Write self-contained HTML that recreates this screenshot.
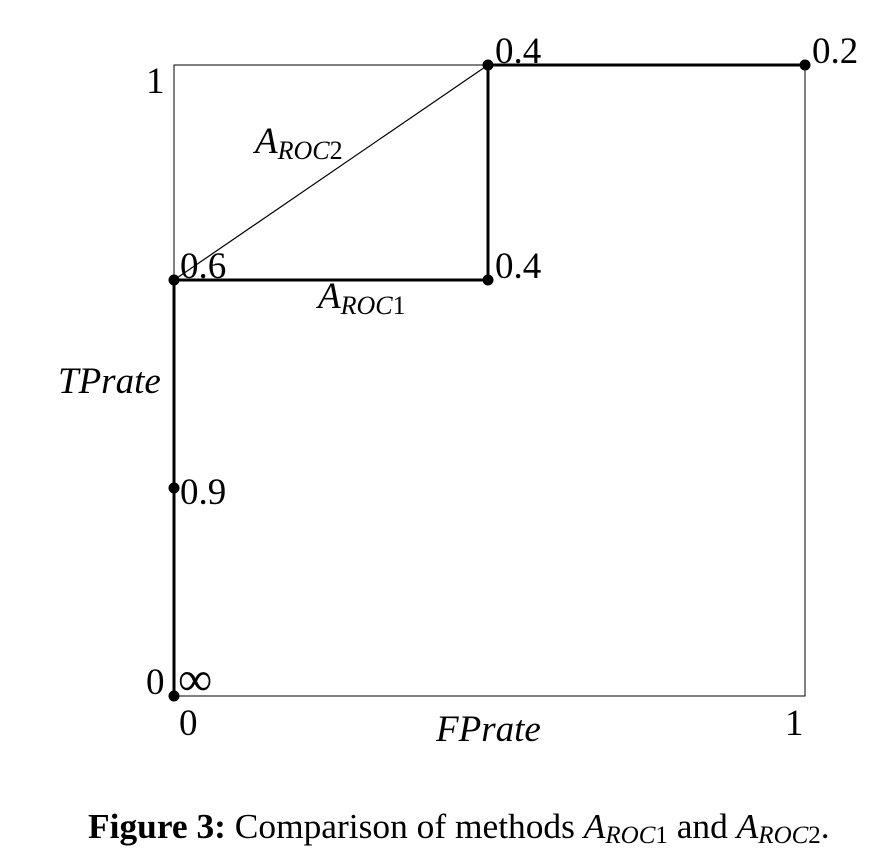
<!DOCTYPE html>
<html><head><style>
html,body{margin:0;padding:0;background:#fff;}
svg{display:block;}
text{font-family:"Liberation Serif",serif;fill:#000;}
</style></head><body>
<svg width="896" height="862" xmlns="http://www.w3.org/2000/svg">
<rect x="174" y="65" width="631" height="631" fill="none" stroke="#000" stroke-width="1"/>
<line x1="174" y1="280" x2="488" y2="65" stroke="#000" stroke-width="1.2"/>
<g stroke="#000" stroke-width="3" fill="none">
<line x1="488" y1="65" x2="805" y2="65"/>
<line x1="488" y1="65" x2="488" y2="280"/>
<line x1="174" y1="280" x2="488" y2="280"/>
<line x1="174" y1="280" x2="174" y2="696"/>
</g>
<g fill="#000">
<circle cx="488" cy="65" r="5.5"/><circle cx="805" cy="65" r="5.5"/>
<circle cx="174" cy="280" r="5.5"/><circle cx="488" cy="280" r="5.5"/>
<circle cx="174" cy="488" r="5.5"/><circle cx="174" cy="696" r="5.5"/>
</g>
<g font-size="37">
<text x="146" y="93">1</text>
<text x="495" y="63">0.4</text>
<text x="812" y="63">0.2</text>
<text x="180" y="278">0.6</text>
<text x="495" y="278">0.4</text>
<text x="180" y="504">0.9</text>
<text x="146" y="694">0</text>
<text x="178" y="695" font-size="48">∞</text>
<text x="179" y="735">0</text>
<text x="785" y="735">1</text>
<text x="255" y="153" font-style="italic">A<tspan font-size="26" dy="6">ROC</tspan><tspan font-style="normal" font-size="26">2</tspan></text>
<text x="318" y="308" font-style="italic">A<tspan font-size="26" dy="6">ROC</tspan><tspan font-style="normal" font-size="26">1</tspan></text>
<text x="58" y="393" font-style="italic">TPrate</text>
<text x="436" y="741" font-style="italic">FPrate</text>
</g>
<text x="88" y="838" font-size="35.4"><tspan font-weight="bold">Figure 3:</tspan> Comparison of methods <tspan font-style="italic">A</tspan><tspan font-style="italic" font-size="25" dy="5">ROC</tspan><tspan font-size="25">1</tspan><tspan dy="-5"> and </tspan><tspan font-style="italic">A</tspan><tspan font-style="italic" font-size="25" dy="5">ROC</tspan><tspan font-size="25">2</tspan><tspan dy="-5">.</tspan></text>
</svg>
</body></html>
